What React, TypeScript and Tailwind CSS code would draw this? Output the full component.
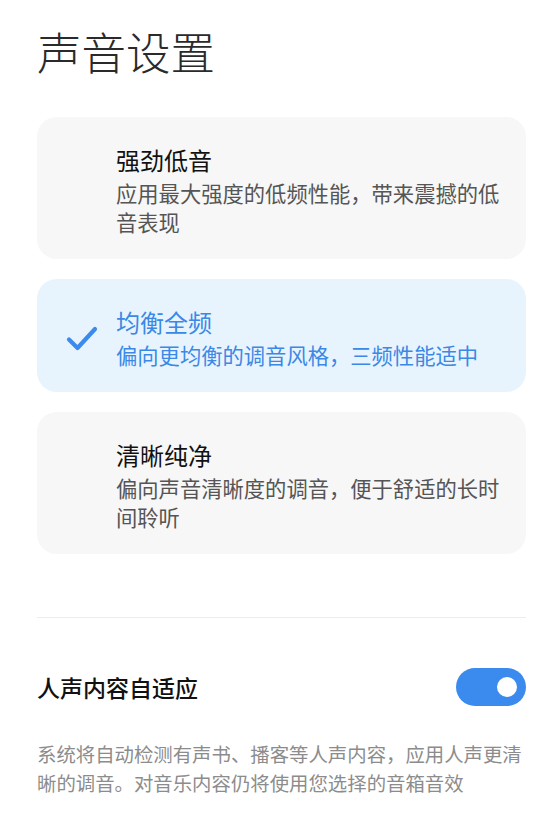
import { useState } from 'react';

type Mode = {
  id: string;
  title: string;
  desc: string;
};

const modes: Mode[] = [
  { id: 'bass', title: '强劲低音', desc: '应用最大强度的低频性能，带来震撼的低音表现' },
  { id: 'balanced', title: '均衡全频', desc: '偏向更均衡的调音风格，三频性能适中' },
  { id: 'clear', title: '清晰纯净', desc: '偏向声音清晰度的调音，便于舒适的长时间聆听' },
];

function CheckIcon() {
  return (
    <svg width="32" height="26" viewBox="0 0 32 26" fill="none">
      <path
        d="M3 14.5 L11.5 23 L29 4"
        stroke="#3b8aed"
        strokeWidth="4.2"
        strokeLinecap="round"
        strokeLinejoin="round"
      />
    </svg>
  );
}

export default function App() {
  const [selected, setSelected] = useState('balanced');
  const [vocal, setVocal] = useState(true);

  return (
    <div
      className="min-h-[837px] bg-white pl-[37px] pr-[29px] pt-[23px]"
      style={{ fontFamily: '"Noto Sans CJK SC", "Noto Sans", sans-serif' }}
    >
      <h1 className="text-[44.5px] font-light leading-[56px] text-[#2a2a2a]">声音设置</h1>

      <div className="mt-[38px] flex flex-col gap-[20px]">
        {modes.map((m) => {
          const active = selected === m.id;
          return (
            <button
              key={m.id}
              type="button"
              onClick={() => setSelected(m.id)}
              className={`flex items-center rounded-[20px] pb-[23px] pt-[28px] pr-[16px] text-left ${
                active ? 'bg-[#e8f4fd]' : 'bg-[#f7f7f7]'
              }`}
            >
              <div className="flex w-[79px] shrink-0 justify-center pl-[10px]">
                {active && <CheckIcon />}
              </div>
              <div className="flex flex-col">
                <div
                  className={`text-[24px] leading-[30px] ${
                    active ? 'text-[#3b88e6]' : 'text-[#111]'
                  }`}
                >
                  {m.title}
                </div>
                <div
                  className={`mt-[3px] text-[21.3px] leading-[29px] ${
                    active ? 'text-[#3b88e6]' : 'text-[#555]'
                  }`}
                >
                  {m.desc}
                </div>
              </div>
            </button>
          );
        })}
      </div>

      <div className="mt-[63px] h-px bg-[#ededed]" />

      <div className="mt-[50px] flex items-center justify-between">
        <span className="text-[23px] font-medium leading-[30px] text-[#111]">人声内容自适应</span>
        <button
          type="button"
          onClick={() => setVocal(!vocal)}
          className={`flex h-[38px] w-[70px] items-center rounded-full px-[9px] ${
            vocal ? 'justify-end bg-[#3b8aed]' : 'justify-start bg-[#ddd]'
          }`}
        >
          <span className="h-[20px] w-[20px] rounded-full bg-white" />
        </button>
      </div>

      <p className="mt-[33px] text-[19.4px] leading-[29px] text-[#8c8c8c]">
        系统将自动检测有声书、播客等人声内容，应用人声更清晰的调音。对音乐内容仍将使用您选择的音箱音效
      </p>
    </div>
  );
}
